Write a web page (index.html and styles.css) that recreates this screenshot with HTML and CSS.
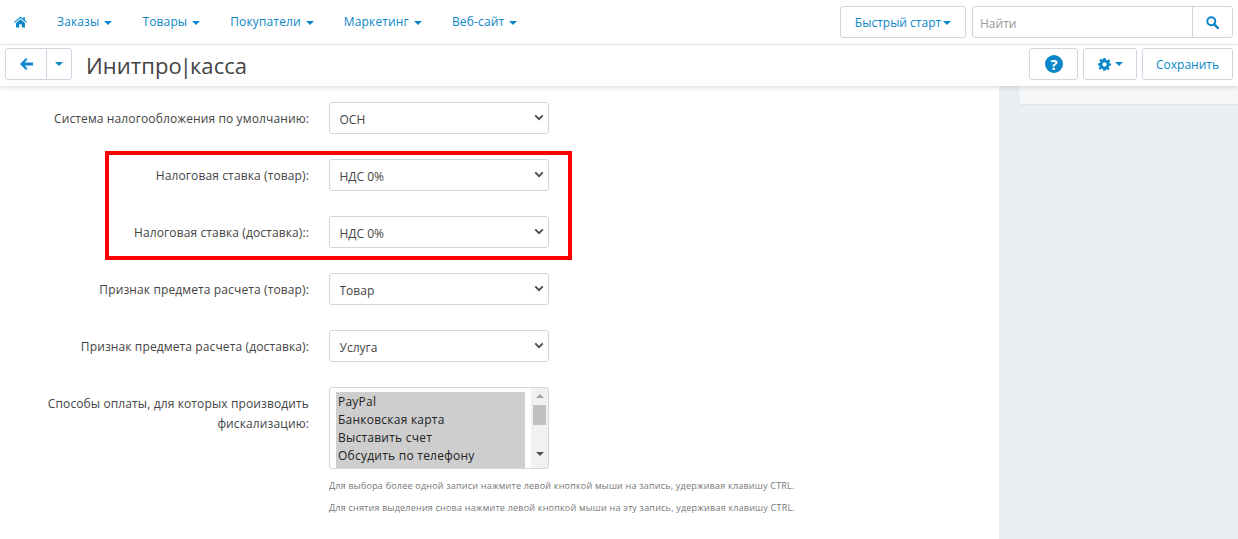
FILE: index.html
```html
<!DOCTYPE html>
<html lang="ru">
<head>
<meta charset="utf-8">
<title>Инитпро|касса</title>
<link rel="stylesheet" href="styles.css">
</head>
<body>
<svg class="defs" width="0" height="0" aria-hidden="true">
  <symbol id="chev" viewBox="0 0 12 8"><path d="M1.5 1.5 6 6l4.5-4.5" fill="none" stroke="#4a4a4a" stroke-width="2.2"/></symbol>
</svg>
<header class="topbar">
  <nav class="menu">
    <a class="home" href="#"><svg width="13" height="12" viewBox="0 0 14 12"><path fill="#0b87c9" d="M7 0 0 5.900l.8.9L7 1.700l6.200 5.100.8-.9-2.300-1.900V1h-1.800v1.500zM2.200 7.100V12h3.400V8.400h2.800V12h3.400V7.100L7 3.100z"/></svg></a>
    <a href="#">Заказы<i class="caret"></i></a>
    <a href="#">Товары<i class="caret"></i></a>
    <a href="#">Покупатели<i class="caret"></i></a>
    <a href="#">Маркетинг<i class="caret"></i></a>
    <a href="#">Веб-сайт<i class="caret"></i></a>
  </nav>
  <div class="top-actions">
    <button class="btn quick">Быстрый старт<i class="caret tight"></i></button>
    <div class="search">
      <input type="text" placeholder="Найти">
      <button class="search-btn"><svg width="13" height="13" viewBox="0 0 13 13"><circle cx="5.300" cy="5.300" r="4" fill="none" stroke="#0b87c9" stroke-width="2"/><path d="m8.300 8.300 3.500 3.500" stroke="#0b87c9" stroke-width="2.400" stroke-linecap="round"/></svg></button>
    </div>
  </div>
</header>
<section class="toolbar">
  <div class="back-group">
    <button class="back"><svg width="13" height="12" viewBox="0 0 13 12"><path fill="#0b87c9" d="M6 0 7.500 1.500 4.600 4.400H13v3.200H4.600l2.900 2.900L6 12 0 6z"/></svg></button>
    <button class="back-more"><i class="caret flat"></i></button>
  </div>
  <h1>Инитпро<span class="pipe">|</span>касса</h1>
  <div class="tool-actions">
    <button class="btn help"><svg width="18" height="18" viewBox="0 0 18 18"><circle cx="9" cy="9" r="9" fill="#0b87c9"/><text x="9" y="14.500" text-anchor="middle" class="qmark">?</text></svg></button>
    <button class="btn gear"><svg width="13" height="13" viewBox="0 0 24 24"><path fill="#0b87c9" fill-rule="evenodd" d="M10 0h4l.7 3.400 2.300 1 3-1.900 2.800 2.800-1.900 3 1 2.300L24 10v4l-3.400.7-1 2.300 1.900 3-2.800 2.800-3-1.900-2.300 1L14 24h-4l-.7-3.400-2.300-1-3 1.900-2.800-2.800 1.900-3-1-2.300L0 14v-4l3.400-.7 1-2.300-1.900-3L5.300 1.200l3 1.900 1-.7zM12 8a4 4 0 1 0 0 8 4 4 0 0 0 0-8z"/></svg><i class="caret tight"></i></button>
    <button class="btn save">Сохранить</button>
  </div>
</section>
<div class="page">
  <main class="content">
    <form class="form">
      <label class="lbl">Система налогообложения по умолчанию:</label>
      <div class="sel"><select><option>ОСН</option></select><svg class="chev"><use href="#chev"/></svg></div>
      <label class="lbl">Налоговая ставка (товар):</label>
      <div class="sel"><select><option>НДС 0%</option></select><svg class="chev"><use href="#chev"/></svg></div>
      <label class="lbl">Налоговая ставка (доставка)::</label>
      <div class="sel"><select><option>НДС 0%</option></select><svg class="chev"><use href="#chev"/></svg></div>
      <label class="lbl">Признак предмета расчета (товар):</label>
      <div class="sel"><select><option>Товар</option></select><svg class="chev"><use href="#chev"/></svg></div>
      <label class="lbl">Признак предмета расчета (доставка):</label>
      <div class="sel"><select><option>Услуга</option></select><svg class="chev"><use href="#chev"/></svg></div>
      <label class="lbl multi-lbl">Способы оплаты, для которых производить фискализацию:</label>
      <div class="multi-cell">
        <div class="listbox">
          <ul class="options">
            <li>PayPal</li>
            <li>Банковская карта</li>
            <li>Выставить счет</li>
            <li>Обсудить по телефону</li>
          </ul>
          <div class="scroll">
            <span class="arrow up"></span>
            <span class="thumb"></span>
            <span class="arrow down"></span>
          </div>
        </div>
        <p class="hint first">Для выбора более одной записи нажмите левой кнопкой мыши на запись, удерживая клавишу CTRL.</p>
        <p class="hint">Для снятия выделения снова нажмите левой кнопкой мыши на эту запись, удерживая клавишу CTRL.</p>
      </div>
    </form>
    <div class="highlight"></div>
  </main>
  <aside class="side"><div class="side-card"></div></aside>
</div>
</body>
</html>
```
FILE: styles.css
```css
* { box-sizing: border-box; }
html, body { margin: 0; height: 100%; }
body {
  font-family: "Open Sans", "Liberation Sans", sans-serif;
  font-size: 12px;
  color: #444;
  background: #fff;
  overflow: hidden;
}
.defs { position: absolute; }
button { font: inherit; background: #fff; cursor: pointer; padding: 0; }

.topbar {
  height: 45px;
  display: flex;
  justify-content: space-between;
  padding: 6px 5px 0 14px;
  border-bottom: 1px solid #f0f1f3;
}
.menu { display: flex; align-items: center; height: 31px; gap: 30px; }
.menu a { color: #0b87c9; text-decoration: none; white-space: nowrap; letter-spacing: .012em; }
.menu .home { display: flex; }
.caret {
  display: inline-block;
  vertical-align: middle;
  margin-left: 5px;
  border-left: 4px solid transparent;
  border-right: 4px solid transparent;
  border-top: 4px solid #0b87c9;
}
.caret.tight { margin-left: 2px; }
.caret.flat { margin: 0; }
.top-actions { display: flex; gap: 6px; }
.btn {
  height: 32px;
  border: 1px solid #ced6e0;
  border-radius: 3px;
  color: #0b87c9;
}
.quick { width: 126px; }
.search {
  width: 261px;
  height: 32px;
  display: flex;
  border: 1px solid #ced6e0;
  border-radius: 3px;
}
.search input {
  flex: 1;
  min-width: 0;
  border: 0;
  outline: 0;
  padding: 2px 7px 0;
  font: inherit;
  background: transparent;
}
.search input::placeholder { color: #999; }
.search-btn {
  width: 40px;
  border: 0;
  border-left: 1px solid #ced6e0;
  background: transparent;
  display: flex;
  align-items: center;
  justify-content: center;
}

.toolbar {
  position: relative;
  z-index: 2;
  height: 41px;
  display: flex;
  align-items: flex-start;
  padding: 3px 5px 0;
  background: #fff;
  box-shadow: 0 1px 5px rgba(0, 0, 0, .16);
}
.back-group {
  display: flex;
  width: 67px;
  height: 32px;
  border: 1px solid #ced6e0;
  border-radius: 3px;
}
.back {
  width: 41px;
  border: 0;
  border-right: 1px solid #ced6e0;
  background: transparent;
  display: flex;
  align-items: center;
  justify-content: center;
}
.back-more {
  flex: 1;
  border: 0;
  background: transparent;
  display: flex;
  align-items: center;
  justify-content: center;
}
h1 {
  margin: 1px 0 0 14px;
  font-size: 22px;
  font-weight: 400;
  line-height: 32px;
  letter-spacing: .003em;
  color: #444;
}
.pipe { margin: 0 -2px; }
.tool-actions { margin-left: auto; display: flex; gap: 5px; }
.help { width: 49px; display: flex; align-items: center; justify-content: center; }
.qmark { font: 700 15px "Open Sans", sans-serif; fill: #fff; }
.gear { width: 54px; display: flex; align-items: center; justify-content: center; }
.gear .caret { margin-left: 4px; }
.save { width: 91px; }

.page { display: flex; height: 453px; }
.content { position: relative; width: 999px; }
.side { flex: 1; background: #ebeef2; padding-left: 20px; }
.side-card {
  height: 18px;
  background: #f6f7f8;
  border-radius: 0 0 0 3px;
  box-shadow: 0 1px 2px rgba(0, 0, 0, .06);
}

.form {
  display: grid;
  grid-template-columns: 309px 220px;
  column-gap: 20px;
  row-gap: 25px;
  padding-top: 16px;
}
.lbl { text-align: right; padding-top: 9px; line-height: 16px; letter-spacing: .01em; }
.multi-lbl { padding-left: 40px; line-height: 20px; padding-top: 7px; }
.sel { position: relative; height: 32px; }
.sel select {
  appearance: none;
  width: 100%;
  height: 32px;
  padding: 2px 9.500px 0;
  border: 1px solid #ced6e0;
  border-radius: 3px;
  background: #fff;
  color: #444;
  font: inherit;
}
.chev { position: absolute; right: 5px; top: 12px; width: 10px; height: 7px; }

.listbox {
  display: flex;
  height: 82px;
  border: 1px solid #ced6e0;
  border-radius: 3px;
  padding: 4px 0 0 6px;
}
.options {
  list-style: none;
  margin: 0;
  padding: 1px 0 0;
  width: 189px;
  height: 76px;
  background: #cecece;
  color: #222;
  font-size: 12px;
  line-height: 18px;
  letter-spacing: .02em;
}
.options li { padding-left: 2px; }
.scroll {
  width: 17px;
  margin-left: 6px;
  margin-top: -4px;
  background: #f1f1f1;
  display: flex;
  flex-direction: column;
  align-items: center;
  border-radius: 0 2px 2px 0;
  padding-top: 6px;
}
.arrow { border-left: 4px solid transparent; border-right: 4px solid transparent; }
.arrow.up { border-bottom: 4px solid #a3a3a3; }
.arrow.down { border-top: 4px solid #505050; margin-top: 27px; }
.thumb { width: 13px; height: 20px; margin-top: 7px; background: #c1c1c1; }
.hint { margin: 0; font-size: 9px; line-height: 12px; color: #777; white-space: nowrap; letter-spacing: .21px; }
.hint.first { margin-top: 11px; margin-bottom: 10px; }

.highlight {
  position: absolute;
  left: 105px;
  top: 65px;
  width: 467px;
  height: 109px;
  border: 4px solid #f00;
  pointer-events: none;
}
```
